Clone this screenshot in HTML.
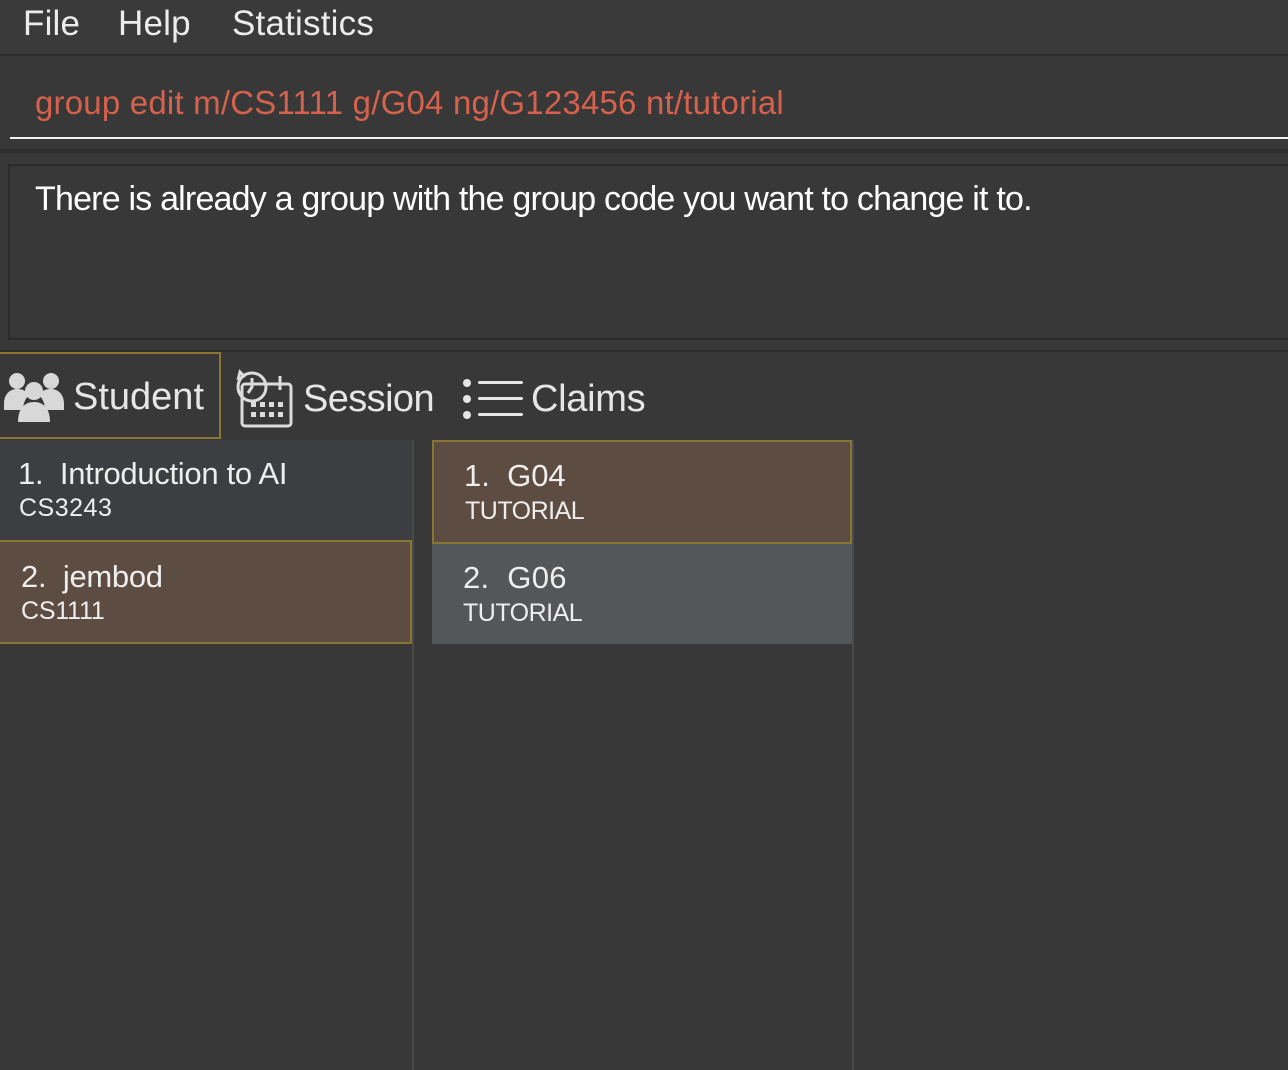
<!DOCTYPE html>
<html><head><meta charset="utf-8"><style>
*{margin:0;padding:0;box-sizing:border-box}
body{width:1288px;height:1070px;background:#383838;font-family:"Liberation Sans",sans-serif;color:#eee;position:relative;overflow:hidden}
.a{position:absolute}
.menu{left:0;top:0;width:1288px;height:56px;background:#3a3a3a;border-bottom:2px solid #2c2c2c}
.menu span{position:absolute;top:4px;font-size:35px;color:#ececec;letter-spacing:0.2px}
.cmd{left:35px;top:84px;font-size:33px;color:#d5624c;letter-spacing:0.2px;white-space:nowrap}
.t{white-space:nowrap}
</style></head><body>
<div class="a menu"><span style="left:23px">File</span><span style="left:118px">Help</span><span style="left:232px">Statistics</span></div>
<div class="a cmd">group edit m/CS1111 g/G04 ng/G123456 nt/tutorial</div>
<div class="a" style="left:10px;top:137px;width:1278px;height:2px;background:#f2f2f2"></div>
<div class="a" style="left:0;top:149px;width:1288px;height:4px;background:#2e2e2e"></div>
<div class="a" style="left:8px;top:164px;width:1290px;height:176px;border:2px solid #2a2a2a;background:#383838"></div>
<div class="a t" style="left:35px;top:180px;font-size:34px;color:#fff;letter-spacing:-0.8px">There is already a group with the group code you want to change it to.</div>
<div class="a" style="left:0;top:350px;width:1288px;height:2px;background:#2e2e2e"></div>
<div class="a" style="left:0;top:352px;width:221px;height:87px;border:2px solid #8b7533;border-left:none"></div>
<svg class="a" style="left:4px;top:370px" width="60" height="52" viewBox="0 0 60 52" fill="#d8d8d8">
<circle cx="13" cy="11" r="8"/><circle cx="47" cy="11" r="8"/><path d="M0 34c0-10 6-15 13-15s10 3 12 6c-4 4-6 9-6 15H0z"/><path d="M60 34c0-10-6-15-13-15s-10 3-12 6c4 4 6 9 6 15h19z"/>
<circle cx="30" cy="21" r="9"/><path d="M14 52c0-14 7-20 16-20s16 6 16 20z"/></svg>
<div class="a t" style="left:73px;top:376px;font-size:38px;color:#e6e6e6;letter-spacing:0px">Student</div>
<svg class="a" style="left:234px;top:368px" width="62" height="62" viewBox="0 0 62 62" fill="none" stroke="#dcdcdc" stroke-width="3">
<circle cx="18" cy="19" r="14"/><path d="M18 10v9l-4 6"/><path d="M4 12l2-8 5 5"/>
<rect x="8" y="16" width="49" height="42" rx="3"/><path d="M46 8v14"/>
<g fill="#dcdcdc" stroke="none"><rect x="17" y="34" width="5" height="5"/><rect x="26" y="34" width="5" height="5"/><rect x="35" y="34" width="5" height="5"/><rect x="44" y="34" width="5" height="5"/><rect x="17" y="44" width="5" height="5"/><rect x="26" y="44" width="5" height="5"/><rect x="35" y="44" width="5" height="5"/><rect x="44" y="44" width="5" height="5"/></g></svg>
<div class="a t" style="left:303px;top:378px;font-size:38px;color:#e6e6e6;letter-spacing:-0.6px">Session</div>
<svg class="a" style="left:462px;top:378px" width="62" height="42" viewBox="0 0 62 42" fill="#e6e6e6">
<circle cx="5" cy="5" r="4"/><circle cx="5" cy="21" r="4"/><circle cx="5" cy="37" r="4"/>
<rect x="16" y="3" width="45" height="3" rx="1.5"/><rect x="16" y="19" width="45" height="3" rx="1.5"/><rect x="16" y="35" width="45" height="3" rx="1.5"/></svg>
<div class="a t" style="left:531px;top:378px;font-size:38px;color:#e6e6e6;letter-spacing:-0.3px">Claims</div>

<div class="a" style="left:412px;top:440px;width:2px;height:630px;background:#4a4a4a"></div>
<div class="a" style="left:852px;top:440px;width:2px;height:630px;background:#4a4a4a"></div>
<div class="a" style="left:0;top:440px;width:412px;height:100px;background:#3d3e41"></div>
<div class="a t" style="left:18px;top:456px;font-size:31px;letter-spacing:-0.3px;color:#eee">1.&nbsp; Introduction to AI</div>
<div class="a t" style="left:19px;top:494px;font-size:25px;letter-spacing:0.5px;color:#eee">CS3243</div>
<div class="a" style="left:0;top:540px;width:412px;height:104px;background:#5d4c41;border:2px solid #8b7533;border-left:none"></div>
<div class="a t" style="left:21px;top:559px;font-size:31px;letter-spacing:-0.3px;color:#eee">2.&nbsp; jembod</div>
<div class="a t" style="left:21px;top:597px;font-size:25px;letter-spacing:-0.2px;color:#eee">CS1111</div>

<div class="a" style="left:432px;top:440px;width:420px;height:104px;background:#5d4c41;border:2px solid #8b7533"></div>
<div class="a t" style="left:464px;top:458px;font-size:31px;letter-spacing:0px;color:#eee">1.&nbsp; G04</div>
<div class="a t" style="left:465px;top:497px;font-size:25px;letter-spacing:-0.5px;color:#eee">TUTORIAL</div>
<div class="a" style="left:432px;top:544px;width:420px;height:100px;background:#53575a"></div>
<div class="a t" style="left:463px;top:560px;font-size:31px;letter-spacing:0.3px;color:#eee">2.&nbsp; G06</div>
<div class="a t" style="left:463px;top:599px;font-size:25px;letter-spacing:-0.5px;color:#eee">TUTORIAL</div>
</body></html>
